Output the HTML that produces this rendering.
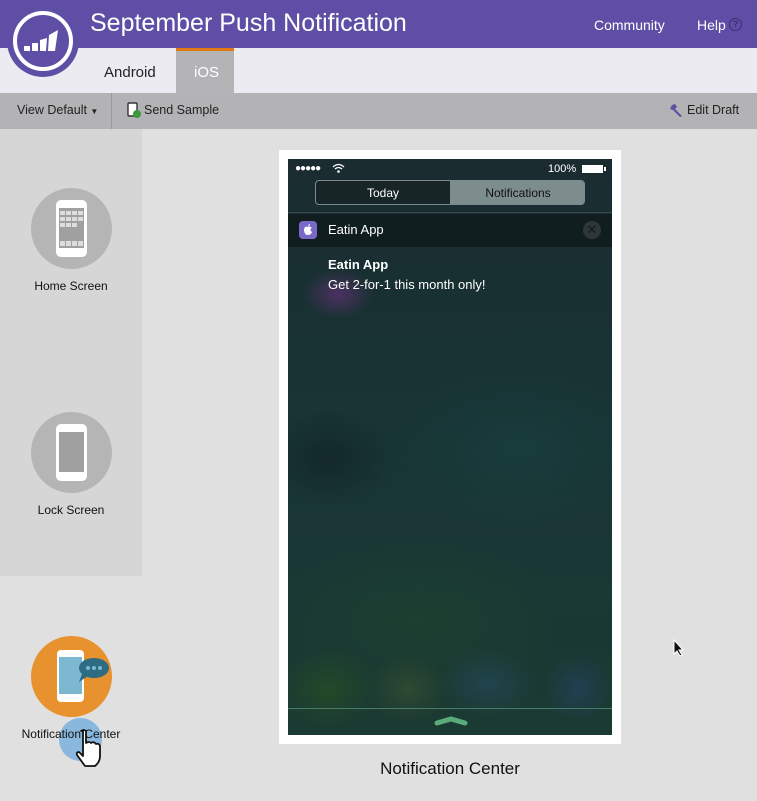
<!DOCTYPE html>
<html><head><meta charset="utf-8"><style>
*{margin:0;padding:0;box-sizing:border-box}
body{width:757px;height:801px;overflow:hidden;background:#e0e0e0;font-family:"Liberation Sans",sans-serif;position:relative}
.abs{position:absolute}
#hdr{left:0;top:0;width:757px;height:48px;background:#5e4ea5}
#tabs{left:0;top:48px;width:757px;height:45px;background:#ecebf1}
#tb{left:0;top:93px;width:757px;height:36px;background:#b3b3b5}
.t{color:#fff;font-size:14px}
#screen{left:288px;top:159px;width:324px;height:576px;overflow:hidden;
background:
radial-gradient(ellipse 35px 25px at 50px 135px,rgba(110,50,130,.6),transparent),
radial-gradient(ellipse 50px 40px at 40px 530px,rgba(40,90,30,.5),transparent),
radial-gradient(ellipse 40px 35px at 120px 530px,rgba(70,90,50,.45),transparent),
radial-gradient(ellipse 50px 35px at 200px 525px,rgba(40,80,110,.45),transparent),
radial-gradient(ellipse 35px 35px at 290px 530px,rgba(40,70,120,.45),transparent),
radial-gradient(ellipse 140px 80px at 130px 460px,rgba(30,70,45,.5),transparent),
radial-gradient(ellipse 70px 50px at 40px 300px,rgba(15,28,30,.5),transparent),
radial-gradient(ellipse 120px 80px at 230px 290px,rgba(25,70,70,.4),transparent),
linear-gradient(#1a2c30,#183535 50%,#1b3a32)}
</style></head><body>
<div id="hdr" class="abs"></div>
<div class="abs" style="left:90px;top:9px;color:#fff;font-size:25px">September Push Notification</div>
<div class="abs t" style="left:594px;top:17px">Community</div>
<div class="abs t" style="left:697px;top:17px">Help</div>
<div class="abs" style="left:729px;top:18px;width:13px;height:13px;border:1.5px solid #3a2f70;border-radius:50%;font-size:9px;color:#3a2f70;text-align:center;line-height:10px;font-weight:bold">?</div>
<div id="tabs" class="abs"></div>
<div class="abs" style="left:176px;top:48px;width:58px;height:45px;background:#b4b4b6;border-top:3px solid #e07a10"></div>
<div class="abs" style="left:104px;top:64px;font-size:15px;color:#222">Android</div>
<div class="abs" style="left:194px;top:64px;font-size:15px;color:#fff">iOS</div>
<div class="abs" style="left:7px;top:5px;width:72px;height:72px;border-radius:50%;background:#5e4ea5"></div>
<div class="abs" style="left:13px;top:11px;width:60px;height:60px;border-radius:50%;border:4px solid #fff"></div>
<svg class="abs" style="left:13px;top:11px" width="60" height="60"><g fill="#fff"><rect x="11" y="35" width="6" height="5"/><rect x="19" y="32" width="6" height="8"/><polygon points="27,29 34,27 33,40 27,40"/><polygon points="36,24 45,19 42,40 35,40"/></g></svg>
<div id="tb" class="abs"></div>
<div class="abs" style="left:111px;top:93px;width:1px;height:36px;background:#9a9a9c"></div>
<div class="abs" style="left:17px;top:103px;font-size:12.5px;color:#222">View Default <span style="font-size:8px">▼</span></div>
<svg class="abs" style="left:127px;top:102px" width="14" height="16"><rect x="1" y="1" width="9" height="13" rx="1" fill="#fff" stroke="#333" stroke-width="1.4"/><circle cx="10" cy="12" r="4" fill="#3a9a3a"/></svg>
<div class="abs" style="left:144px;top:103px;font-size:12.5px;color:#222">Send Sample</div>
<svg class="abs" style="left:669px;top:103px" width="14" height="15"><path d="M3 2 L6 1 L8 4 L6 6 L13 13 L11 14 L4 7 L1 6 Z" fill="#5e4ea5"/></svg>
<div class="abs" style="left:687px;top:103px;font-size:12.5px;color:#222">Edit Draft</div>
<div class="abs" style="left:0;top:129px;width:142px;height:447px;background:#d6d6d6"></div>
<div class="abs" style="left:31px;top:188px;width:81px;height:81px;border-radius:50%;background:#b5b5b5"></div>
<div class="abs" style="left:56px;top:200px;width:31px;height:57px;border-radius:5px;background:#fff"></div>
<div class="abs" style="left:59px;top:208px;width:25px;height:40px;background:#a0a0a0"></div>
<svg class="abs" style="left:59px;top:210px" width="25" height="38"><g fill="#ddd"><rect x="1" y="1" width="5" height="4"/><rect x="7" y="1" width="5" height="4"/><rect x="13" y="1" width="5" height="4"/><rect x="19" y="1" width="5" height="4"/><rect x="1" y="7" width="5" height="4"/><rect x="7" y="7" width="5" height="4"/><rect x="13" y="7" width="5" height="4"/><rect x="19" y="7" width="5" height="4"/><rect x="1" y="13" width="5" height="4"/><rect x="7" y="13" width="5" height="4"/><rect x="13" y="13" width="5" height="4"/><rect x="1" y="31" width="5" height="5"/><rect x="7" y="31" width="5" height="5"/><rect x="13" y="31" width="5" height="5"/><rect x="19" y="31" width="5" height="5"/></g></svg>
<div class="abs" style="left:0;top:279px;width:142px;text-align:center;font-size:12px;color:#111">Home Screen</div>
<div class="abs" style="left:31px;top:412px;width:81px;height:81px;border-radius:50%;background:#b5b5b5"></div>
<div class="abs" style="left:56px;top:424px;width:31px;height:57px;border-radius:5px;background:#fff"></div>
<div class="abs" style="left:59px;top:432px;width:25px;height:40px;background:#a0a0a0"></div>
<div class="abs" style="left:0;top:503px;width:142px;text-align:center;font-size:12px;color:#111">Lock Screen</div>
<div class="abs" style="left:31px;top:636px;width:81px;height:81px;border-radius:50%;background:#e8912f"></div>
<div class="abs" style="left:57px;top:650px;width:27px;height:52px;border-radius:4px;background:#fff"></div>
<div class="abs" style="left:59px;top:657px;width:23px;height:37px;background:#7cb8d0"></div>
<svg class="abs" style="left:76px;top:656px" width="34" height="28"><ellipse cx="18" cy="12" rx="15" ry="10" fill="#2e6c84"/><polygon points="6,18 3,26 12,20" fill="#2e6c84"/><circle cx="12" cy="12" r="2" fill="#7cb8d0"/><circle cx="18" cy="12" r="2" fill="#7cb8d0"/><circle cx="24" cy="12" r="2" fill="#7cb8d0"/></svg>
<div class="abs" style="left:59px;top:718px;width:43px;height:43px;border-radius:50%;background:rgba(110,170,220,.75)"></div>
<div class="abs" style="left:0;top:727px;width:142px;text-align:center;font-size:12px;color:#111">Notification Center</div>
<svg class="abs" style="left:72px;top:728px" width="34" height="46"><path d="M9 3 q3-2 5 0 v12 q3-2 5 0 q3-2 5 1 q3-1 4 2 v10 q0 6-5 10 h-10 l-8-11 q-1-3 2-3 l4 4 v-25 z" fill="#fff" stroke="#111" stroke-width="1.8" stroke-linejoin="round"/></svg>
<div class="abs" style="left:279px;top:150px;width:342px;height:594px;background:#fff"></div>
<div id="screen" class="abs">
<div class="abs" style="left:7px;top:4px;font-size:10px;color:#fff;letter-spacing:-1px">●●●●●</div>
<svg class="abs" style="left:44px;top:4px" width="13" height="10"><path d="M1 4 Q6.5 -1 12 4 M3 6 Q6.5 3 10 6" stroke="#fff" stroke-width="1.3" fill="none"/><circle cx="6.5" cy="8.5" r="1.3" fill="#fff"/></svg>
<div class="abs" style="left:260px;top:4px;font-size:11px;color:#fff">100%</div>
<div class="abs" style="left:294px;top:6px;width:21px;height:8px;background:#fff"></div>
<div class="abs" style="left:316px;top:8px;width:2px;height:4px;background:#fff"></div>
<div class="abs" style="left:27px;top:21px;width:270px;height:25px;border:1px solid #7d8a8c;border-radius:4px;overflow:hidden;background:rgba(20,30,30,.5)">
<div class="abs" style="left:134px;top:0;width:136px;height:25px;background:#7d8d8d"></div>
<div class="abs" style="left:0;top:5px;width:134px;text-align:center;font-size:12px;color:#fff">Today</div>
<div class="abs" style="left:134px;top:5px;width:136px;text-align:center;font-size:12px;color:#111">Notifications</div></div>
<div class="abs" style="left:0;top:53px;width:324px;height:1px;background:#3a4a4c"></div>
<div class="abs" style="left:0;top:55px;width:324px;height:33px;background:rgba(12,20,22,.6)"></div>
<div class="abs" style="left:11px;top:62px;width:18px;height:18px;border-radius:4px;background:#7a6ac8"></div>
<svg class="abs" style="left:14px;top:64px" width="12" height="14"><path d="M6 4 C4 3 2 4 2 7 C2 10 4 12 5 12 C6 12 6 11.5 7 12 C8 12 10 10 10 9 C8 8 8 5 10 5 C9 3.5 7.5 3.5 6 4 Z M6 3.5 C6 2 7 1 8 1 C8 2.5 7 3.5 6 3.5 Z" fill="#fff"/></svg>
<div class="abs" style="left:40px;top:63px;font-size:13px;color:#fff">Eatin App</div>
<div class="abs" style="left:295px;top:62px;width:18px;height:18px;border-radius:50%;background:#2e3638;color:#141a1c;font-size:13px;text-align:center;line-height:18px">✕</div>
<div class="abs" style="left:40px;top:98px;font-size:13px;font-weight:bold;color:#fff">Eatin App</div>
<div class="abs" style="left:40px;top:118px;font-size:13px;color:#fff">Get 2-for-1 this month only!</div>
<div class="abs" style="left:0;top:549px;width:324px;height:1px;background:#4a7a6a"></div>
<svg class="abs" style="left:146px;top:555px" width="34" height="14"><path d="M3 9 L17 5 L31 9" stroke="#5aaa7a" stroke-width="5" stroke-linecap="round" fill="none"/></svg>
</div>
<div class="abs" style="left:279px;top:759px;width:342px;text-align:center;font-size:17px;color:#111">Notification Center</div>
<svg class="abs" style="left:673px;top:639px" width="12" height="18"><path d="M1 1 v14 l3-3 l3 5 l2-1 l-3-5 h4 z" fill="#111" stroke="#fff" stroke-width="1"/></svg>
</body></html>
